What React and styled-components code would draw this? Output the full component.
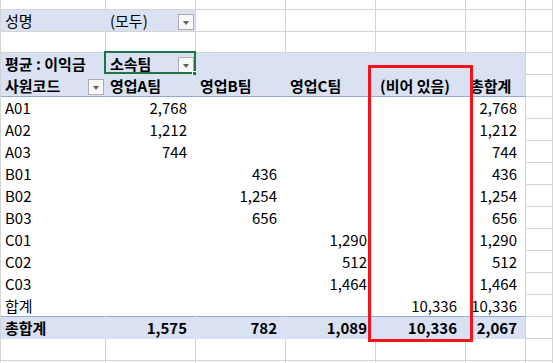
import React from 'react';
import styled, { createGlobalStyle } from 'styled-components';

const GRID = '#d4d4d4';
const HEAD = '#d9e1f2';
const RULE = '#8ea9db';

const palette = {
  grid: { bg: '#ffffff', line: GRID },
  head: { bg: HEAD, line: HEAD },
  body: { bg: '#ffffff', line: '#ffffff' },
};

const Global = createGlobalStyle`
  html, body { margin: 0; padding: 0; background: #fff; }
  body { font-family: "Noto Sans CJK KR", "Noto Sans", sans-serif; }
`;

const Sheet = styled.div`
  position: relative;
  width: 553px;
  height: 363px;
  overflow: hidden;
  box-sizing: border-box;
  border-left: 1px solid ${GRID};
  font-family: "Noto Sans CJK KR", "Noto Sans", sans-serif;
  font-size: 15px;
  color: #000;
`;

const Row = styled.div`
  display: grid;
  grid-template-columns: 105px 90px 90px 90px 90px 60px 1fr;
  height: ${(p) => p.$h}px;
`;

const Cell = styled.div`
  box-sizing: border-box;
  position: relative;
  display: flex;
  align-items: center;
  justify-content: ${(p) => (p.$num ? 'flex-end' : 'flex-start')};
  padding: 0 8px 0 4px;
  background: ${(p) => palette[p.$kind].bg};
  border-right: 1px solid ${(p) => (p.$edge ? GRID : palette[p.$kind].line)};
  border-bottom: 1px solid
    ${(p) => (p.$rule ? RULE : p.$floor ? GRID : palette[p.$kind].line)};
  font-weight: ${(p) => (p.$bold ? 700 : 400)};
  white-space: nowrap;
  line-height: 1;
`;

const DropButton = styled.span`
  margin-left: auto;
  margin-right: -7px;
  margin-bottom: 1px;
  align-self: flex-end;
  width: 16px;
  height: 16px;
  box-sizing: border-box;
  border: 1px solid #acacac;
  background: #f8f8f8;
  display: flex;
  align-items: center;
  justify-content: center;
  &::after {
    content: '';
    margin-top: 1px;
    border-left: 3.5px solid transparent;
    border-right: 3.5px solid transparent;
    border-top: 4px solid #5f5f5f;
  }
`;

const Selection = styled.div`
  position: absolute;
  top: -2px;
  left: -2px;
  right: -1px;
  bottom: 0;
  border: 2px solid #217346;
  pointer-events: none;
`;

const Handle = styled.span`
  position: absolute;
  right: -5px;
  bottom: -6px;
  width: 5px;
  height: 5px;
  background: #217346;
  border: 1px solid #fff;
`;

const Highlight = styled.div`
  position: absolute;
  left: 367px;
  top: 65px;
  width: 105px;
  height: 277px;
  box-sizing: border-box;
  border: 3px solid #f5121a;
  pointer-events: none;
`;

const teams = ['영업A팀', '영업B팀', '영업C팀', '(비어 있음)', '총합계'];

const body = [
  ['A01', ['2,768', '', '', '', '2,768']],
  ['A02', ['1,212', '', '', '', '1,212']],
  ['A03', ['744', '', '', '', '744']],
  ['B01', ['', '436', '', '', '436']],
  ['B02', ['', '1,254', '', '', '1,254']],
  ['B03', ['', '656', '', '', '656']],
  ['C01', ['', '', '1,290', '', '1,290']],
  ['C02', ['', '', '512', '', '512']],
  ['C03', ['', '', '1,464', '', '1,464']],
  ['합계', ['', '', '', '10,336', '10,336']],
];

const totals = ['1,575', '782', '1,089', '10,336', '2,067'];

const GridRow = ({ h }) => (
  <Row $h={h}>
    {Array.from({ length: 7 }).map((_, i) => (
      <Cell key={i} $kind="grid" />
    ))}
  </Row>
);

export default function App() {
  return (
    <>
      <Global />
      <Sheet>
        <GridRow h={10} />
        <Row $h={22}>
          <Cell $kind="head" $floor>성명</Cell>
          <Cell $kind="head" $floor $edge>
            (모두)
            <DropButton />
          </Cell>
          {Array.from({ length: 5 }).map((_, i) => (
            <Cell key={i} $kind="grid" />
          ))}
        </Row>
        <GridRow h={21} />
        <Row $h={22}>
          <Cell $kind="head" $bold>평균 : 이익금</Cell>
          <Cell $kind="head" $bold>
            소속팀
            <DropButton />
            <Selection>
              <Handle />
            </Selection>
          </Cell>
          <Cell $kind="head" />
          <Cell $kind="head" />
          <Cell $kind="head" />
          <Cell $kind="head" $edge />
          <Cell $kind="grid" />
        </Row>
        <Row $h={22}>
          <Cell $kind="head" $bold $rule>
            사원코드
            <DropButton />
          </Cell>
          {teams.map((t, i) => (
            <Cell key={t} $kind="head" $bold $rule $edge={i === teams.length - 1}>
              {t}
            </Cell>
          ))}
          <Cell $kind="grid" />
        </Row>
        {body.map(([code, vals], r) => {
          const last = r === body.length - 1;
          return (
            <Row key={code} $h={22}>
              <Cell $kind="body" $rule={last}>{code}</Cell>
              {vals.map((v, i) => (
                <Cell key={i} $kind="body" $num $rule={last} $edge={i === vals.length - 1}>
                  {v}
                </Cell>
              ))}
              <Cell $kind="grid" />
            </Row>
          );
        })}
        <Row $h={22}>
          <Cell $kind="head" $bold>총합계</Cell>
          {totals.map((v, i) => (
            <Cell key={i} $kind="head" $bold $num $edge={i === totals.length - 1}>
              {v}
            </Cell>
          ))}
          <Cell $kind="grid" />
        </Row>
        <GridRow h={22} />
        <GridRow h={22} />
        <Highlight />
      </Sheet>
    </>
  );
}
